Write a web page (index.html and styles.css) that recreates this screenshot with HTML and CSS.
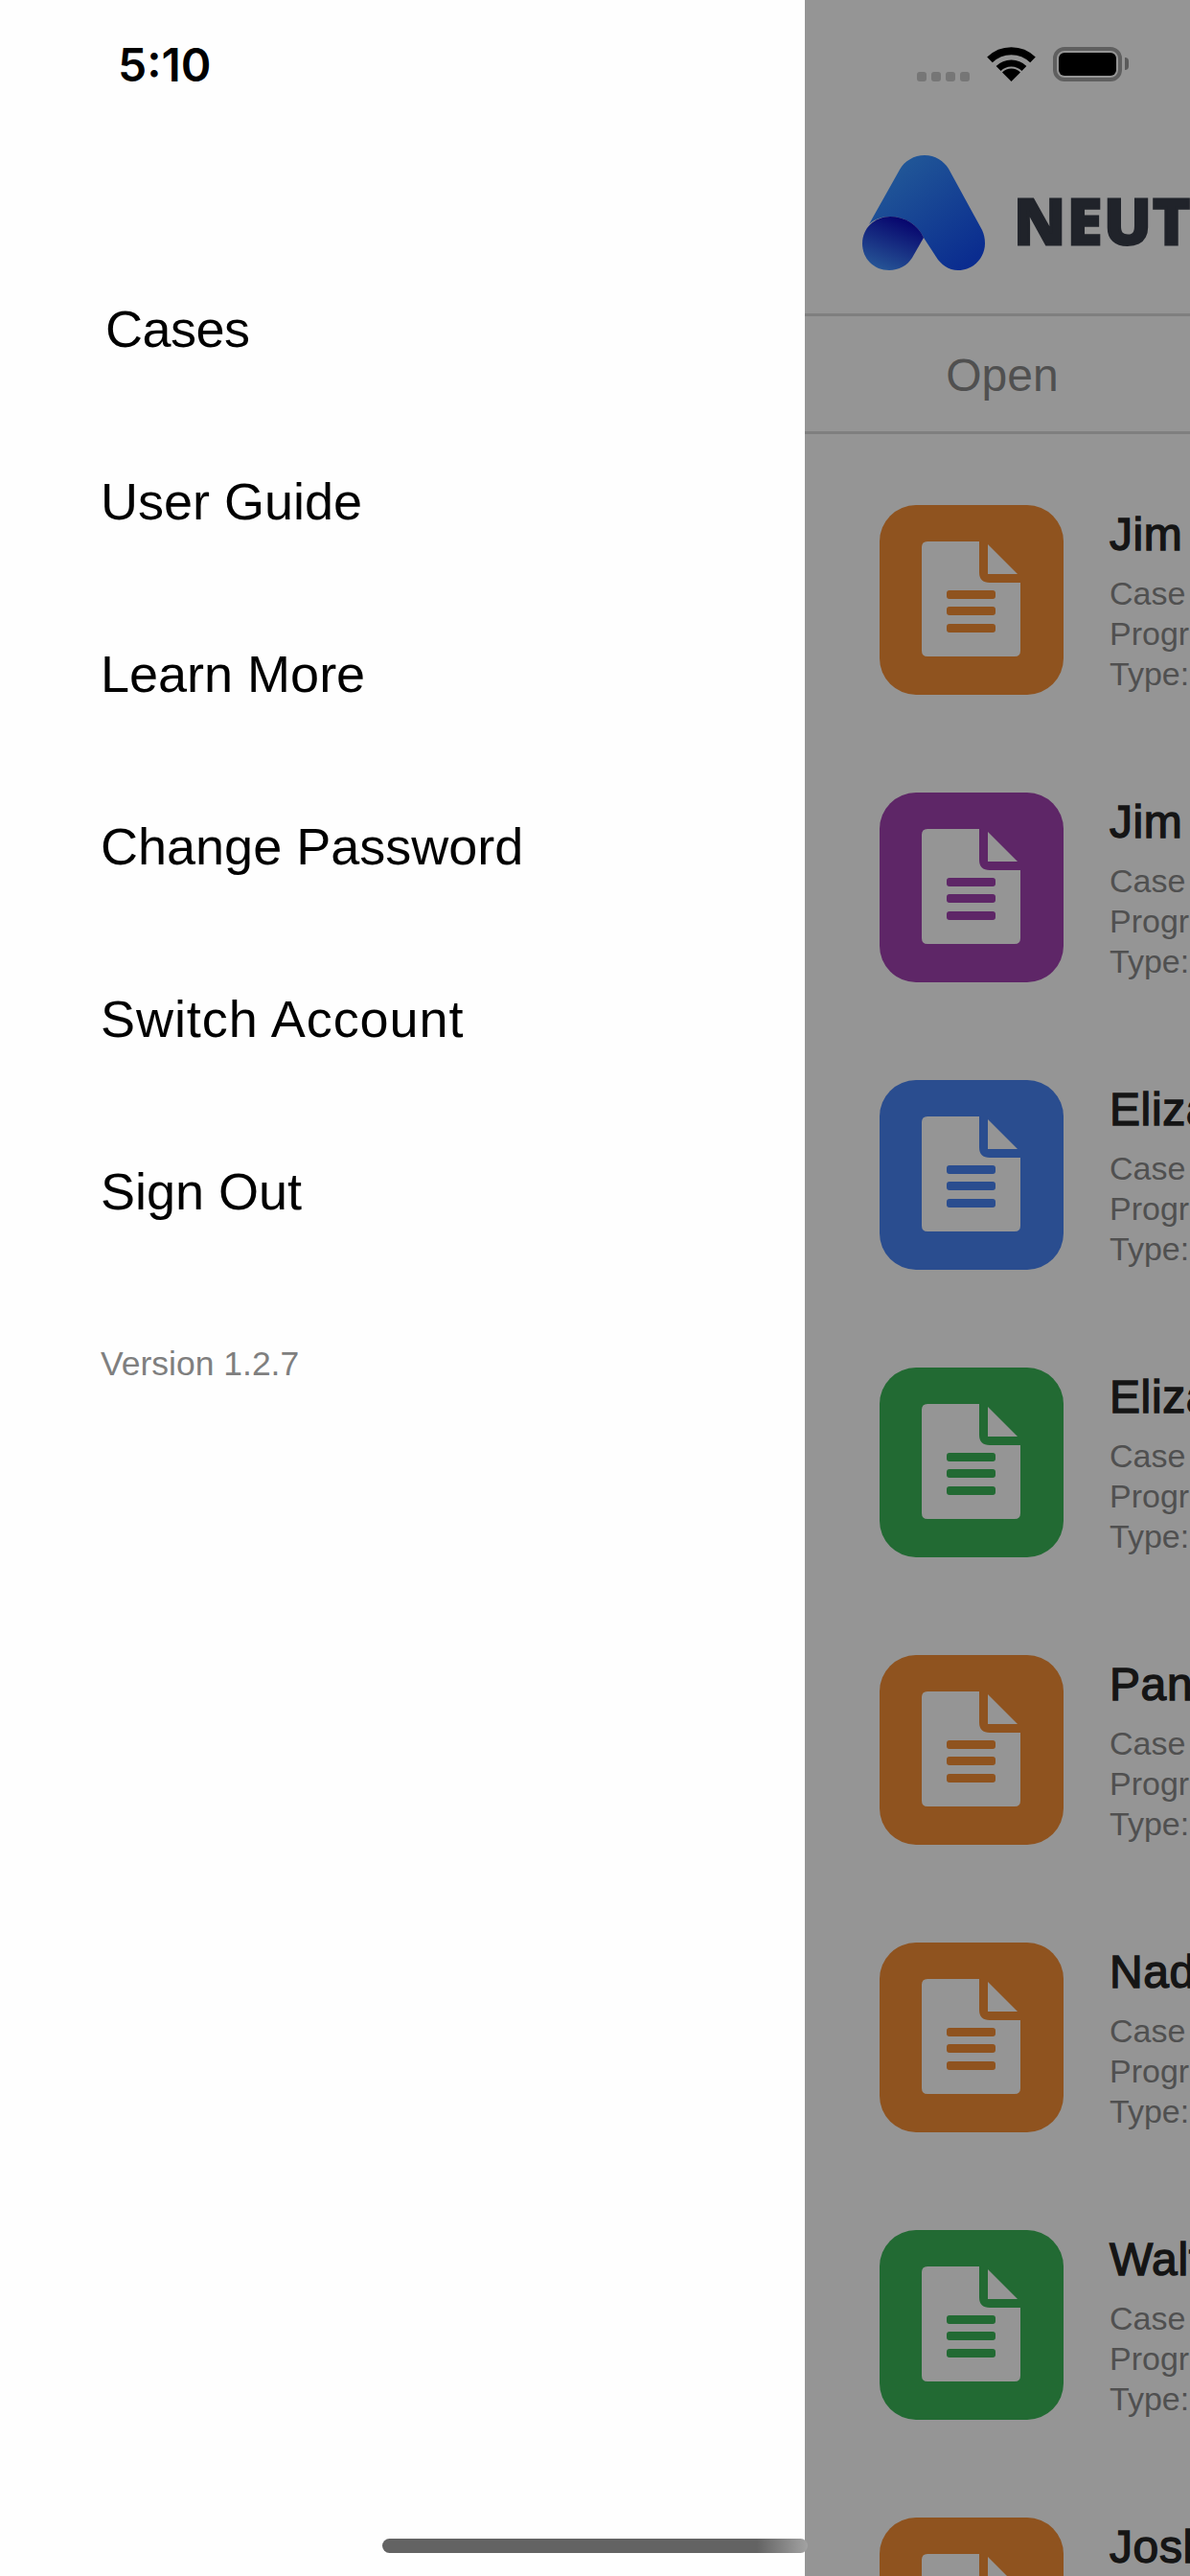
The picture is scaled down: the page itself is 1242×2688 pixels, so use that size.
FILE: index.html
```html
<!DOCTYPE html>
<html lang="en">
<head>
    <meta charset="UTF-8">
    <meta name="viewport" content="width=device-width, initial-scale=1.0">
    <title>Menu</title>
    <link rel="stylesheet" href="styles.css">
</head>
<body>

    <!-- Shared document icon -->
    <svg class="defs" width="0" height="0">
        <defs>
            <symbol id="doc-icon" viewBox="0 0 192 198">
                <rect width="192" height="198" rx="38" fill="currentColor"/>
                <path fill="#959595" d="M50 38H104V70Q104 81 115 81H147V152Q147 158 141 158H50Q44 158 44 152V44Q44 38 50 38Z"/>
                <path fill="#959595" d="M113 41L144 72H113Z"/>
                <rect x="70" y="89" width="51" height="9" rx="3" fill="currentColor"/>
                <rect x="70" y="106" width="51" height="9" rx="3" fill="currentColor"/>
                <rect x="70" y="124" width="51" height="9" rx="3" fill="currentColor"/>
            </symbol>
            <linearGradient id="logo-main" x1="0.15" y1="0.1" x2="0.85" y2="0.95">
                <stop offset="0" stop-color="#225998"/>
                <stop offset="1" stop-color="#0a2c8f"/>
            </linearGradient>
            <linearGradient id="logo-curl" x1="0.7" y1="0.1" x2="0.3" y2="1">
                <stop offset="0" stop-color="#08086f"/>
                <stop offset="1" stop-color="#265596"/>
            </linearGradient>
        </defs>
    </svg>

    <div class="screen">

        <!-- Drawer -->
        <aside class="drawer">
            <div class="drawer-status">5:10</div>
            <nav class="menu">
                <a href="#" class="menu-item menu-item-first">Cases</a>
                <a href="#" class="menu-item">User Guide</a>
                <a href="#" class="menu-item">Learn More</a>
                <a href="#" class="menu-item">Change Password</a>
                <a href="#" class="menu-item menu-item-wide">Switch Account</a>
                <a href="#" class="menu-item">Sign Out</a>
            </nav>
            <div class="version">Version 1.2.7</div>
        </aside>

        <!-- Dimmed page behind the drawer -->
        <main class="page">
            <div class="page-status">
                <div class="signal">
                    <span class="signal-dot"></span>
                    <span class="signal-dot"></span>
                    <span class="signal-dot"></span>
                    <span class="signal-dot"></span>
                </div>
                <svg class="wifi" viewBox="0 0 47 36">
                    <path d="M1 13.4A32 32 0 0 1 46 13.4" fill="none" stroke="#000" stroke-width="8"/>
                    <path d="M10.1 22.6A19 19 0 0 1 36.9 22.6" fill="none" stroke="#000" stroke-width="7"/>
                    <path d="M23.5 36L14 26.5A13.4 13.4 0 0 1 33 26.5Z" fill="#000"/>
                </svg>
                <div class="battery"><div class="battery-level"></div></div>
                <div class="battery-cap"></div>
            </div>

            <div class="brand">
                <svg class="logo" viewBox="0 0 130 120">
                    <path fill="url(#logo-main)" d="M7 72L39 15C44 6 54 0 65 0C76 0 85 6 90 14L125 78C127 82 128 87 128 92C128 107 116 120 100 120C90 120 82 114 77 106L64 86C58 72 44 64 29 64C20 64 12 67 7 72Z"/>
                    <path fill="url(#logo-curl)" d="M0 92C0 76 13 64 29 64C44 64 58 72 64 86L52 107C47 115 38 120 28 120C12 120 0 108 0 92Z"/>
                </svg>
                <span class="brand-name">NEUT</span>
            </div>

            <div class="tabs">
                <div class="tab">Open</div>
            </div>

            <div class="case-list">
                <div class="case-row">
                    <svg class="case-icon orange"><use href="#doc-icon"/></svg>
                    <div class="case-text">
                        <div class="case-name">Jim</div>
                        <div class="case-line">Case</div>
                        <div class="case-line">Progress</div>
                        <div class="case-line">Type:</div>
                    </div>
                </div>
                <div class="case-row">
                    <svg class="case-icon purple"><use href="#doc-icon"/></svg>
                    <div class="case-text">
                        <div class="case-name">Jim</div>
                        <div class="case-line">Case</div>
                        <div class="case-line">Progress</div>
                        <div class="case-line">Type:</div>
                    </div>
                </div>
                <div class="case-row">
                    <svg class="case-icon blue"><use href="#doc-icon"/></svg>
                    <div class="case-text">
                        <div class="case-name">Eliza</div>
                        <div class="case-line">Case</div>
                        <div class="case-line">Progress</div>
                        <div class="case-line">Type:</div>
                    </div>
                </div>
                <div class="case-row">
                    <svg class="case-icon green"><use href="#doc-icon"/></svg>
                    <div class="case-text">
                        <div class="case-name">Eliza</div>
                        <div class="case-line">Case</div>
                        <div class="case-line">Progress</div>
                        <div class="case-line">Type:</div>
                    </div>
                </div>
                <div class="case-row">
                    <svg class="case-icon orange"><use href="#doc-icon"/></svg>
                    <div class="case-text">
                        <div class="case-name">Pan</div>
                        <div class="case-line">Case</div>
                        <div class="case-line">Progress</div>
                        <div class="case-line">Type:</div>
                    </div>
                </div>
                <div class="case-row">
                    <svg class="case-icon orange"><use href="#doc-icon"/></svg>
                    <div class="case-text">
                        <div class="case-name">Nad</div>
                        <div class="case-line">Case</div>
                        <div class="case-line">Progress</div>
                        <div class="case-line">Type:</div>
                    </div>
                </div>
                <div class="case-row">
                    <svg class="case-icon green"><use href="#doc-icon"/></svg>
                    <div class="case-text">
                        <div class="case-name">Walt</div>
                        <div class="case-line">Case</div>
                        <div class="case-line">Progress</div>
                        <div class="case-line">Type:</div>
                    </div>
                </div>
                <div class="case-row">
                    <svg class="case-icon orange"><use href="#doc-icon"/></svg>
                    <div class="case-text">
                        <div class="case-name">Josh</div>
                        <div class="case-line">Case</div>
                        <div class="case-line">Progress</div>
                        <div class="case-line">Type:</div>
                    </div>
                </div>
            </div>
        </main>

        <!-- Home indicator sits over both panels -->
        <div class="home-bar"></div>
    </div>

</body>
</html>
```

FILE: styles.css
```css
* {
    margin: 0;
    padding: 0;
    box-sizing: border-box;
}

body {
    font-family: "Liberation Sans", Arial, sans-serif;
    background-color: #959595;
    height: 2688px;
    overflow: hidden;
}

.defs {
    display: block;
    height: 0;
}

.screen {
    display: flex;
    position: relative;
    width: 1242px;
    height: 2688px;
    overflow: hidden;
}

/* Drawer */
.drawer {
    width: 840px;
    flex-shrink: 0;
    background-color: #fefefe;
    color: #000;
}

.drawer-status {
    height: 136px;
    padding: 40px 0 0 123px;
    font-family: Inter, Arial, sans-serif;
    font-size: 48px;
    line-height: 56px;
    font-weight: 600;
}

.menu {
    display: flex;
    flex-direction: column;
    margin-top: 117px;
}

.menu-item {
    display: flex;
    align-items: center;
    height: 180px;
    padding-left: 105px;
    font-size: 54px;
    color: #000;
    text-decoration: none;
}

.menu-item-first {
    padding-left: 110px;
    letter-spacing: -0.5px;
}

.menu-item-wide {
    letter-spacing: 0.95px;
}

.version {
    margin-top: 68px;
    padding-left: 105px;
    font-size: 35.5px;
    line-height: 44px;
    color: #7f7f7f;
}

/* Page behind the drawer */
.page {
    flex: 1;
    min-width: 0;
    overflow: hidden;
    background-color: #959595;
}

.page-status {
    display: flex;
    align-items: flex-end;
    height: 136px;
    padding: 49px 0 51px 117px;
}

.signal {
    display: flex;
    gap: 5px;
}

.signal-dot {
    width: 10px;
    height: 10px;
    border-radius: 3px;
    background-color: #767676;
}

.wifi {
    width: 47px;
    height: 36px;
    margin-left: 20px;
    overflow: visible;
}

.battery {
    width: 72px;
    height: 36px;
    margin-left: 20px;
    padding: 2px;
    border: 4px solid #5f5f5f;
    border-radius: 12px;
}

.battery-level {
    height: 100%;
    background-color: #000;
    border-radius: 6px;
}

.battery-cap {
    width: 4px;
    height: 13px;
    margin: 0 0 12px 3px;
    background-color: #5a5a5a;
    border-radius: 0 6px 6px 0;
}

.brand {
    display: flex;
    align-items: flex-start;
    gap: 28px;
    height: 194px;
    padding: 26px 0 0 60px;
    border-bottom: 3px solid #7f7f7f;
    white-space: nowrap;
}

.logo {
    width: 130px;
    height: 120px;
    flex-shrink: 0;
}

.brand-name {
    margin-top: 22px;
    font-family: "Noto Sans", Arial, sans-serif;
    font-size: 66px;
    line-height: 90px;
    font-weight: 800;
    letter-spacing: 1.5px;
    color: #20232a;
    -webkit-text-stroke: 3px #20232a;
}

.tabs {
    height: 123px;
    border-bottom: 3px solid #7f7f7f;
}

.tab {
    width: 412px;
    padding-top: 2px;
    font-size: 48px;
    line-height: 120px;
    text-align: center;
    color: #505050;
}

/* Case rows */
.case-row {
    display: flex;
    gap: 48px;
    height: 300px;
    padding: 74px 0 0 78px;
}

.case-icon {
    width: 192px;
    height: 198px;
    flex-shrink: 0;
}

.orange {
    color: #8f531f;
}

.purple {
    color: #5e2667;
}

.blue {
    color: #2a4d8f;
}

.green {
    color: #226a33;
}

.case-text {
    padding-top: 3px;
    white-space: nowrap;
}

.case-name {
    font-size: 48px;
    line-height: 56px;
    letter-spacing: 0.6px;
    color: #151515;
    -webkit-text-stroke: 1.4px #151515;
    margin-bottom: 12px;
}

.case-line {
    font-size: 34px;
    line-height: 42px;
    color: #505050;
}

/* Home indicator */
.home-bar {
    position: absolute;
    left: 399px;
    top: 2649px;
    width: 444px;
    height: 15px;
    border-radius: 8px;
    background: linear-gradient(to right, #636363 88%, #a2a2a2 100%);
}
```
